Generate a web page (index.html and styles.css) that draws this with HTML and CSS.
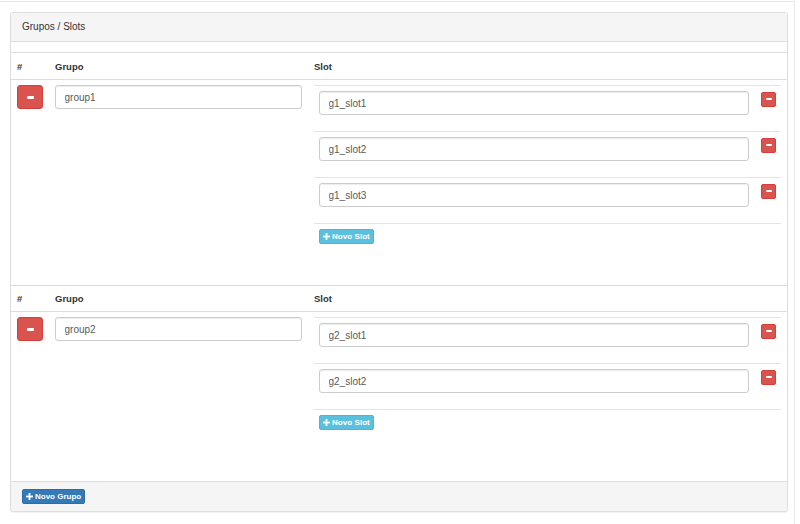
FILE: index.html
```html
<!DOCTYPE html>
<html>
<head>
<meta charset="utf-8">
<link rel="stylesheet" href="styles.css">
</head>
<body>
<div class="frame">
  <div class="panel">
    <div class="panel-heading">Grupos / Slots</div>
    <div class="panel-body">
      <section class="group">
        <div class="grow ghead">
          <div class="c">#</div>
          <div class="c">Grupo</div>
          <div class="c">Slot</div>
        </div>
        <div class="grow gbody">
          <div class="c"><button class="btn btn-danger btn-md"><span class="minus"></span></button></div>
          <div class="c"><input class="form-control" value="group1"></div>
          <div class="c c-slots">
            <div class="slots">
              <div class="slot">
                <div class="slot-in"><input class="form-control" value="g1_slot1"></div>
                <div class="slot-btn"><button class="btn btn-danger btn-sq"><span class="minus sm"></span></button></div>
              </div>
              <div class="slot">
                <div class="slot-in"><input class="form-control" value="g1_slot2"></div>
                <div class="slot-btn"><button class="btn btn-danger btn-sq"><span class="minus sm"></span></button></div>
              </div>
              <div class="slot">
                <div class="slot-in"><input class="form-control" value="g1_slot3"></div>
                <div class="slot-btn"><button class="btn btn-danger btn-sq"><span class="minus sm"></span></button></div>
              </div>
              <div class="slot-add">
                <button class="btn btn-info btn-xs"><svg class="plus" viewBox="0 0 7 7" width="7" height="7"><rect x="2.6" y="0" width="1.8" height="7" fill="#fff"/><rect x="0" y="2.6" width="7" height="1.8" fill="#fff"/></svg>Novo Slot</button>
              </div>
            </div>
          </div>
        </div>
      </section>
      <section class="group">
        <div class="grow ghead g2">
          <div class="c">#</div>
          <div class="c">Grupo</div>
          <div class="c">Slot</div>
        </div>
        <div class="grow gbody">
          <div class="c"><button class="btn btn-danger btn-md"><span class="minus"></span></button></div>
          <div class="c"><input class="form-control" value="group2"></div>
          <div class="c c-slots">
            <div class="slots">
              <div class="slot">
                <div class="slot-in"><input class="form-control" value="g2_slot1"></div>
                <div class="slot-btn"><button class="btn btn-danger btn-sq"><span class="minus sm"></span></button></div>
              </div>
              <div class="slot">
                <div class="slot-in"><input class="form-control" value="g2_slot2"></div>
                <div class="slot-btn"><button class="btn btn-danger btn-sq"><span class="minus sm"></span></button></div>
              </div>
              <div class="slot-add">
                <button class="btn btn-info btn-xs"><svg class="plus" viewBox="0 0 7 7" width="7" height="7"><rect x="2.6" y="0" width="1.8" height="7" fill="#fff"/><rect x="0" y="2.6" width="7" height="1.8" fill="#fff"/></svg>Novo Slot</button>
              </div>
            </div>
          </div>
        </div>
      </section>
    </div>
    <div class="panel-footer">
      <button class="btn btn-primary btn-xs"><svg class="plus" viewBox="0 0 7 7" width="7" height="7"><rect x="2.6" y="0" width="1.8" height="7" fill="#fff"/><rect x="0" y="2.6" width="7" height="1.8" fill="#fff"/></svg>Novo Grupo</button>
    </div>
  </div>
</div>
</body>
</html>
```

FILE: styles.css
```css
* { box-sizing: border-box; }
html, body { margin: 0; padding: 0; background: #fff; }
body {
  font-family: "Liberation Sans", Arial, Helvetica, sans-serif;
  font-size: 10px;
  color: #333;
}
.frame {
  width: 795px;
  height: 523px;
  margin-top: 1px;
  border-top: 1px solid #e8e8e8;
  border-right: 1px solid #e8e8e8;
  padding: 10px 6px 0 10px;
}
.panel {
  width: 778px;
  border: 1px solid #ddd;
  border-radius: 3px;
  background: #fff;
  box-shadow: 0 1px 1px rgba(0,0,0,.05);
}
.panel-heading {
  height: 29px;
  line-height: 28px;
  padding: 0 11px;
  background: #f5f5f5;
  border-bottom: 1px solid #ddd;
  border-radius: 2px 2px 0 0;
  color: #333;
  font-size: 10px;
}
.panel-body {
  padding: 10px 0;
}
.group {
  border-top: 1px solid #ddd;
}
.grow {
  display: grid;
  grid-template-columns: 38px 259px 1fr;
}
.ghead {
  height: 27px;
  border-bottom: 1px solid #ddd;
  align-items: center;
  font-weight: bold;
  font-size: 9.5px;
  color: #333;
}
.ghead.g2 { height: 26px; }
.ghead .c { padding: 0 6px; }
.gbody .c { padding: 5px 6px 0; }
.gbody .c-slots { padding: 5px 6px 6px; }

.form-control {
  display: block;
  width: 100%;
  height: 24px;
  margin: 0;
  padding: 0 8.5px;
  font-family: "Liberation Sans", Arial, Helvetica, sans-serif;
  font-size: 10px;
  color: #5a5a5a;
  background: #fff;
  border: 1px solid #ccc;
  border-radius: 3px;
  box-shadow: inset 0 1px 1px rgba(0,0,0,.075);
  outline: none;
}

.slots { margin-bottom: 14px; }
.slot {
  display: grid;
  grid-template-columns: 1fr 26px;
  border-top: 1px solid #e4e4e4;
  height: 46px;
}
.slot-in { padding: 5px 6px 0 5px; }
.slot-btn { padding: 5px 5px 0 6px; }
.slot-add {
  border-top: 1px solid #e4e4e4;
  padding: 5px 6px 21px 5px;
}

.btn {
  display: inline-flex;
  align-items: center;
  justify-content: center;
  margin: 0;
  border: 1px solid transparent;
  font-family: "Liberation Sans", Arial, Helvetica, sans-serif;
  color: #fff;
  cursor: pointer;
}
.btn-danger { background: #d9534f; border-color: #d43f3a; }
.btn-info { background: #5bc0de; border-color: #46b8da; }
.btn-primary { background: #337ab7; border-color: #2e6da4; }
.btn-md {
  width: 26px;
  height: 24px;
  border-radius: 3px;
  padding: 0;
}
.btn-sq {
  width: 15px;
  height: 15px;
  border-radius: 2px;
  padding: 0;
}
.btn-xs {
  height: 15px;
  padding: 0 3px 0 3px;
  border-radius: 2px;
  font-size: 8.1px;
  font-weight: bold;
  line-height: 13px;
  gap: 1px;
}
.plus { display: block; flex: none; margin-right: 1px; }
.minus {
  display: block;
  width: 7px;
  height: 3px;
  background: #fff;
  border-radius: 1px;
}
.minus.sm {
  width: 6px;
  height: 2px;
}

.panel-footer {
  height: 30px;
  padding: 7px 11px 0;
  background: #f5f5f5;
  border-top: 1px solid #ddd;
  border-radius: 0 0 2px 2px;
}
.panel-footer .btn-xs { font-size: 8px; }
```
